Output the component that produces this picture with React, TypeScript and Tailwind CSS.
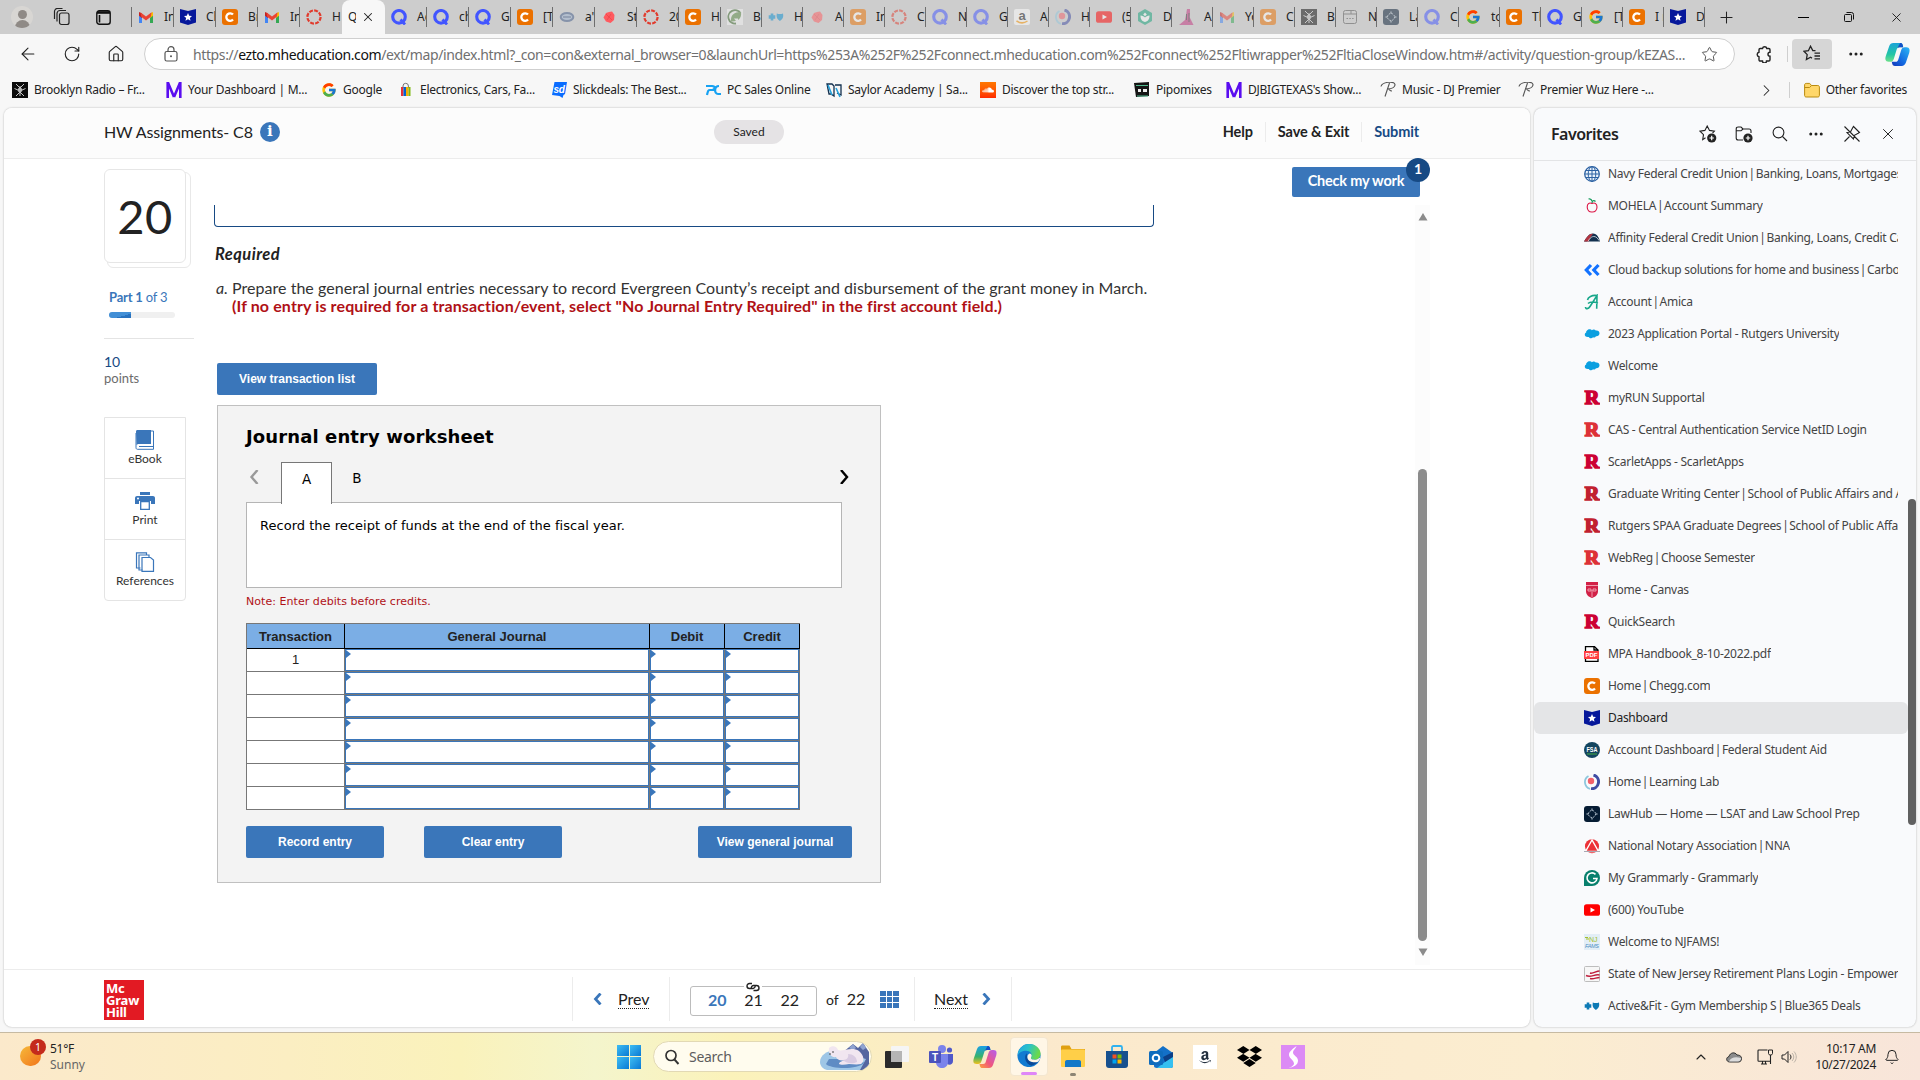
import type { ReactNode } from "react";
import { FcGoogle } from "react-icons/fc";
import { FaDropbox, FaAmazon, FaSoundcloud } from "react-icons/fa";
import {
  ArrowLeft,
  Bell,
  ChevronRight,
  ChevronUp,
  Ellipsis,
  House,
  Plus,
  RotateCw,
  Search,
  Star,
  X,
} from "lucide-react";

function Svg({ children, size = 16, box = 16 }: { children: ReactNode; size?: number; box?: number }) {
  return (
    <svg width={size} height={size} viewBox={`0 0 ${box} ${box}`} fill="none" className="shrink-0">
      {children}
    </svg>
  );
}

function Gmail() {
  return (
    <Svg>
      <path d="M1 3.500V14h3V7z" fill="#4285f4" />
      <path d="M15 3.500V14h-3V7z" fill="#34a853" />
      <path d="M12 4.500 15 3v3.800l-3 2.200z" fill="#fbbc04" />
      <path d="M1 3v3.800L4 9V4.500z" fill="#c5221f" />
      <path d="M2.400 3.200 8 7.500l5.600-4.300L12.800 7.800 8 11.500 3.200 7.800z" fill="#ea4335" />
    </Svg>
  );
}

function Shield() {
  return (
    <Svg>
      <path d="M0 0 8 2l8-2v13.500L8 16l-8-2.500z" fill="#06189b" />
      <path d="m8 4 1.200 2.700 2.800.3-2.100 1.900.6 2.900L8 10.300l-2.500 1.500.6-2.900L4 7l2.800-.3z" fill="#fff" />
    </Svg>
  );
}

function Chegg() {
  return (
    <Svg>
      <rect width="16" height="16" rx="3" fill="#eb7100" />
      <path d="M11 5.600A3.800 3.800 0 1 0 11 10.600" stroke="#fff" strokeWidth="2.300" />
    </Svg>
  );
}

function Canvas() {
  return (
    <Svg>
      <circle cx="8" cy="8" r="6.600" stroke="#e13b2d" strokeWidth="2.200" strokeDasharray="3.900 1.280" />
    </Svg>
  );
}

function QLetter() {
  return (
    <Svg>
      <circle cx="8" cy="7.800" r="6.300" stroke="#4255ff" strokeWidth="3.100" />
      <path d="m9.500 10.500 4.500 5" stroke="#4255ff" strokeWidth="2.800" />
    </Svg>
  );
}

function Ring() {
  return (
    <Svg>
      <ellipse cx="8" cy="8" rx="6.300" ry="4" stroke="#8693aa" strokeWidth="2" fill="#b4bfce" />
      <path d="M4 8h8" stroke="#76839b" />
    </Svg>
  );
}

function Berry() {
  return (
    <Svg>
      <path d="M8 3 11 2.500l2.500 3.500-.5 5L9.500 14l-4.500-1.500-2.500-4L5 4z" fill="#ff5a5f" />
      <path d="M5 5l6 6M10 5l-4 6" stroke="#e0393e" strokeWidth=".5" />
    </Svg>
  );
}

function Leaf() {
  return (
    <Svg>
      <rect width="16" height="16" fill="#f3f3f3" />
      <path d="M9 14.500A6.700 6.700 0 1 1 13.500 4" stroke="#3f6b2f" strokeWidth="1.800" />
      <path d="M4 12.500C3 5 9 2.500 14 3c1 6-3 10-10 9.500z" fill="#5b8a45" />
      <path d="M7 9.500h4v5z" fill="#f3f3f3" />
    </Svg>
  );
}

function BlueCross({ color = "#0d7ab5" }: { color?: string }) {
  return (
    <Svg>
      <path d="M2.700 4.500h2.600v1.700H7.300v3.600h-2v1.700H2.700V9.800H.7V6.200h2z" fill={color} />
      <path d="M8.800 4.500c2 .8 4.200.8 6.200 0 .8 3.500-.3 5.800-3.100 7.500-2.800-1.700-3.900-4-3.100-7.500z" fill={color} />
    </Svg>
  );
}

function Amazon() {
  return (
    <span className="flex h-4 w-4 shrink-0 flex-col items-center justify-center rounded-[2px] bg-white">
      <Svg>
        <text x="8" y="10.500" textAnchor="middle" fontSize="13" fontWeight="700" fill="#222" fontFamily="Liberation Sans">a</text>
        <path d="M2.500 11.800c3.500 2.600 7.500 2.600 11 .2" stroke="#ff9900" strokeWidth="1.500" />
      </Svg>
    </span>
  );
}

function Orbit() {
  return (
    <Svg>
      <path d="M9.500 1a7 7 0 0 1-2.500 13.700" stroke="#3f4ca3" strokeWidth="3" />
      <path d="M4.500 2a7 7 0 0 0 1.500 12.800" stroke="#8ec7dd" strokeWidth="1.800" />
      <circle cx="7" cy="7" r="3.200" fill="#f2606a" />
    </Svg>
  );
}

function YouTube() {
  return (
    <Svg>
      <rect y="2.200" width="16" height="11.600" rx="2.600" fill="#f00" />
      <path d="m6.500 5.500 4.500 2.500-4.500 2.500z" fill="#fff" />
    </Svg>
  );
}

function GreenHex() {
  return (
    <Svg>
      <path d="m8 0 7 4v8l-7 4-7-4V4z" fill="#16a37a" />
      <path d="M8 13C4 12 3.500 9 3.500 6.500c2 0 3.500 1 4.500 2 1-1 2.500-2 4.500-2C12.500 9 12 12 8 13z" fill="#fff" />
      <path d="m8 3.500 1.800 2L8 7.200 6.200 5.500z" fill="#fff" />
    </Svg>
  );
}

function Lady() {
  return (
    <Svg>
      <path d="M9 0h3v4l-.5 4 4 8H1l6-5 1-5z" fill="#c2347f" />
      <path d="M8.500 5v6M11 4v9" stroke="#333" />
    </Svg>
  );
}

function Radio() {
  return (
    <Svg>
      <rect width="16" height="16" fill="#0c0c0c" />
      <path d="m4 2 4 4 4-4M2.500 6.500 8 9l5.500-2.500M4 14l4-4 4 4M8 4v10" stroke="#c8c8c8" strokeWidth="1" />
      <circle cx="8" cy="8" r="2.300" fill="#bbb" />
    </Svg>
  );
}

function NotePage() {
  return (
    <Svg>
      <rect x="1.500" y="1.500" width="13" height="13" rx="2" stroke="#555" />
      <path d="M1.500 5h13M9 1.500V5M4.500 9.500h1.500m1.300 0h1.500m1.300 0h1.500" stroke="#555" />
    </Svg>
  );
}

function LawHub() {
  return (
    <Svg>
      <rect width="16" height="16" rx="3" fill="#061c33" />
      <circle cx="8" cy="8" r="3.500" stroke="#c8d4e0" strokeDasharray="1.500 1.250" />
      <path d="M8 2.500v2M8 11.500v2M2.500 8h2M11.500 8h2" stroke="#c8d4e0" />
    </Svg>
  );
}

function MLetter() {
  return (
    <Svg>
      <path d="M1.700 16V0M1.700 0 8 15M8 15 14.300 0M14.300 0v16" stroke="#5a0df0" strokeWidth="2.600" />
    </Svg>
  );
}

function ShoppingBag() {
  return (
    <Svg>
      <path d="M5 6V4a2.700 2.700 0 0 1 5.400 0v2" stroke="#777" />
      <path d="M3 5h2.500v9H3z" fill="#e53238" />
      <path d="M5.500 5H8v9H5.500z" fill="#0064d2" />
      <path d="M8 5h2.500v9H8z" fill="#f5af02" />
      <path d="M10.500 5h2v9h-2z" fill="#7db813" />
    </Svg>
  );
}

function Slick() {
  return (
    <Svg>
      <path d="M3.500 0H16l-2 12-1.500 1-1 3-3-2-7.500-1z" fill="#0a6cff" />
      <text x="2.500" y="11" fill="#fff" fontSize="10" fontStyle="italic" fontWeight="700" fontFamily="Liberation Sans">sd</text>
    </Svg>
  );
}

function PcSales() {
  return (
    <Svg>
      <path d="M1 4h6c4 0 3 4 0 4H5c-2 0-2 1-3 5M16 12h-3c-4 0-4-8 1-8" stroke="#17a2f2" strokeWidth="2.200" />
    </Svg>
  );
}

function Saylor() {
  return (
    <Svg>
      <path d="M1 2h5l2 2v10l-3-2H3zM9 3h6v10l-4-2" stroke="#12304f" strokeWidth="1.300" />
      <path d="m2 3 4 10M10 6l4 9" stroke="#25a2dc" strokeWidth="1.600" />
    </Svg>
  );
}

function SoundCloud() {
  return (
    <span className="flex h-4 w-4 shrink-0 items-center justify-center bg-linear-to-b from-[#ff7700] to-[#ff2a00]">
      <FaSoundcloud size={12} color="#fff" />
    </span>
  );
}

function Pipo() {
  return (
    <Svg>
      <path d="M0 1 15 0v14l-13 1z" fill="#151515" />
      <path d="M2 3.500h12M3 14h11" stroke="#4fb88d" strokeWidth="1.200" />
      <path d="M4 7h3v3H4zM9 7h4v3H9z" fill="#eee" />
    </Svg>
  );
}

function Premier() {
  return (
    <Svg>
      <path d="M1 4.500C2 0 14-1.500 15 2.500c0 3.500-5 4.500-8 4.500M9.500 1 5 14.500M8 7c2 0 1 2 4 2" stroke="#555" strokeWidth="1.100" />
    </Svg>
  );
}

function Globe() {
  return (
    <Svg>
      <circle cx="8" cy="8" r="7.300" fill="#eaf2fb" stroke="#2d62a3" strokeWidth="1.300" />
      <path d="M8 .7v14.600M1 8h14M2 4.500h12M2 11.500h12" stroke="#2d62a3" />
      <ellipse cx="8" cy="8" rx="3.800" ry="7.300" stroke="#2d62a3" />
    </Svg>
  );
}

function Apple() {
  return (
    <Svg>
      <path d="M8 5.500C5 4 3.200 6 3.200 9c0 3.200 2.100 5.200 4.800 5 2.900.2 5-1.800 5-5 0-3-2-5-5-3.500z" stroke="#dc1646" strokeWidth="1.100" />
      <path d="M4.500 1c1.500-.5 3 .5 3.500 2M8 5C8 2.500 10 2 11.500 3.500" stroke="#159a5b" strokeWidth="1.300" />
    </Svg>
  );
}

function Affinity() {
  return (
    <Svg>
      <path d="M0 11.500C3 7 5 3.500 9 3.500c4 0 6 4 7 8z" fill="#12304f" />
      <path d="M0 11.500C3 7 5 3.800 8.500 3.800 10 4 6 6 5 11.500z" fill="#b2343f" />
      <path d="M4 11.500c2-4 4-5 6-5s4 2 5 4" stroke="#dfe5ea" strokeWidth=".8" />
    </Svg>
  );
}

function Carbonite() {
  return (
    <Svg>
      <path d="M7 3 2.300 8 7 13M14.500 3 9.800 8l4.700 5" stroke="#1372ff" strokeWidth="3.200" />
    </Svg>
  );
}

function Amica() {
  return (
    <Svg>
      <path d="M1.500 13c0 2.500 3 2 4.500-.5L13 1.500l-.3 13.300M4 9.500c2-2 7-1.500 10-.5M12.500 1.500C8 1 4 3 3.500 6" stroke="#18a78a" strokeWidth="1.600" />
    </Svg>
  );
}

function Cloud() {
  return (
    <Svg>
      <path d="M3 4.500C4.500 2.500 7 3 7.800 4.200 9 3 11 3.200 11.800 4.500c2.200-.5 3.700 1 3.700 2.800 0 2-1.800 3.200-3.500 2.900-.8 1.400-2.200 1.500-3 1-1 1.500-3.500 1.300-4.200-.3C2 11.300.5 9.800.8 8.200 1 7.200 1.700 6.500 2.200 6.400 2 5.600 2.500 5 3 4.500z" fill="#0b9fe0" />
    </Svg>
  );
}

function RLetter({ color }: { color: string }) {
  return (
    <Svg>
      <text x="8" y="14.200" textAnchor="middle" fill={color} stroke={color} strokeWidth="1.600" fontSize="19" fontWeight="700" fontFamily="Liberation Serif" textLength="14.500" lengthAdjust="spacingAndGlyphs">
        R
      </text>
    </Svg>
  );
}

function Crest() {
  return (
    <Svg>
      <path d="M2 0h12v9c0 4-3 6-6 7-3-1-6-3-6-7z" fill="#d22147" />
      <path d="M2 3.500h12M8 8v7M4 7h3v2H4zM9 7h3v2H9z" stroke="#f3a9b8" strokeWidth=".9" />
    </Svg>
  );
}

function Pdf() {
  return (
    <Svg>
      <path d="M1.500 5V.7h9L14 4v11.300H1.500V12" fill="#fff" stroke="#000" strokeWidth="1.300" />
      <path d="M10 .5V4h4" stroke="#000" strokeWidth="1.300" />
      <rect y="5" width="15" height="8" fill="#ff4141" />
      <text x="7.500" y="11.200" textAnchor="middle" fontSize="6" fontWeight="700" fill="#fff" fontFamily="Liberation Sans">PDF</text>
    </Svg>
  );
}

function Fsa() {
  return (
    <Svg>
      <circle cx="8" cy="8" r="8" fill="#14455f" />
      <text x="8" y="10" textAnchor="middle" fontSize="7.500" fontWeight="700" fill="#fff" fontFamily="Liberation Sans" textLength="11" lengthAdjust="spacingAndGlyphs">FSA</text>
      <path d="M3 12h10" stroke="#3f9a46" strokeWidth="1.200" />
    </Svg>
  );
}

function Notary() {
  return (
    <Svg>
      <circle cx="8" cy="8.300" r="7" fill="#ec3237" />
      <path d="M8 2 1.500 13.500h13z" stroke="#fff" strokeWidth="1.400" fill="#ec3237" />
      <path d="M0 13.500h16" stroke="#a9a9b3" strokeWidth="1" />
    </Svg>
  );
}

function Grammarly() {
  return (
    <Svg>
      <path d="M0 16V8a8 8 0 1 1 8 8z" fill="#08806d" />
      <path d="M11.500 4.300A5 5 0 1 0 13 8.500H9" stroke="#fff" strokeWidth="1.600" />
    </Svg>
  );
}

function Njfams() {
  return (
    <Svg>
      <rect width="16" height="16" fill="#e3eef6" />
      <path d="M1 3.500h3M2 5h3" stroke="#a0bf2e" />
      <text x="5" y="7.500" fontSize="7" fill="#a0bf2e" fontFamily="Liberation Sans">NJ</text>
      <text x="1" y="13.500" fontSize="5.500" fill="#4c8fc3" fontStyle="italic" fontFamily="Liberation Sans" textLength="14">FAMS</text>
    </Svg>
  );
}

function Empower() {
  return (
    <Svg>
      <rect x=".5" y=".5" width="15" height="15" rx="1" fill="#f7f7f7" stroke="#bdbdbd" />
      <path d="M6 7c3 1 6-2 9.500-2M2 9.500c5 2.500 8-1.500 13.500-.5M6 12.500c4 1 6-1 9.500-1" stroke="#bf1e3d" strokeWidth="1.500" />
    </Svg>
  );
}

const leadTabs: [ReactNode, string][] = [
  [<Gmail />, "Inbox"],
  [<Shield />, "Ch"],
  [<Chegg />, "Br"],
  [<Gmail />, "Inbox"],
  [<Canvas />, "H"],
];

const midTabs: [ReactNode, string][] = [
  [<QLetter />, "Ac"],
  [<QLetter />, "ch"],
  [<QLetter />, "G"],
  [<Chegg />, "[T"],
  [<Ring />, "a'"],
  [<Berry />, "St"],
  [<Canvas />, "20"],
  [<Chegg />, "H"],
];

// [icon, visible title, sleeping]
const tailTabs: [ReactNode, string, boolean][] = [
  [<Leaf />, "B", true],
  [<BlueCross color="#0a8ed0" />, "H", true],
  [<Berry />, "A", true],
  [<Chegg />, "In", true],
  [<Canvas />, "C", true],
  [<QLetter />, "N", true],
  [<QLetter />, "G", true],
  [<Amazon />, "A", true],
  [<Orbit />, "H", true],
  [<YouTube />, "(5", true],
  [<GreenHex />, "D", true],
  [<Lady />, "A", true],
  [<Gmail />, "Yo", true],
  [<Chegg />, "C", true],
  [<Radio />, "B", true],
  [<NotePage />, "N", true],
  [<LawHub />, "La", true],
  [<QLetter />, "C", true],
  [<FcGoogle size={16} />, "to", false],
  [<Chegg />, "Th", false],
  [<QLetter />, "G", false],
  [<FcGoogle size={16} />, "[T", false],
  [<Chegg />, "I n", false],
  [<Shield />, "D", false],
];

function Tab({ icon, title, narrow, asleep, last }: { icon: ReactNode; title: string; narrow?: boolean; asleep?: boolean; last?: boolean }) {
  return (
    <div className={`flex h-full items-center ${narrow ? "w-[41px]" : "w-[42px]"}`}>
      <div className="flex min-w-0 flex-1 items-center overflow-hidden whitespace-nowrap pl-[6px]">
        <span className={`flex h-4 w-4 shrink-0 items-center ${asleep ? "opacity-50" : ""}`}>{icon}</span>
        <span className="pl-[10px] text-[12px] text-[#222]">{title}</span>
      </div>
      {!last && <div className="h-5 w-px bg-[#6e6e6e]" />}
    </div>
  );
}

function TabStrip() {
  return (
    <div className="flex h-[34px] items-center bg-[#cdcdcd]">
      <div className="flex w-[131px] items-center">
        <span className="ml-[11px] flex h-[22px] w-[22px] flex-col items-center justify-center overflow-hidden rounded-full bg-[#d8d6d3]">
          <span className="mt-1 h-[9px] w-[9px] rounded-full bg-[#8f8a86]" />
          <span className="mt-px h-[9px] w-[15px] rounded-t-full bg-[#8f8a86]" />
        </span>
        <span className="ml-[20px]">
          <Svg size={18} box={18}>
            <rect x="6.500" y="5" width="9.500" height="11.500" rx="2" stroke="#222" strokeWidth="1.200" />
            <path d="M4 13.500V5.500a3 3 0 0 1 3-3h6M1.500 11V3.500a3 3 0 0 1 3-3h5" stroke="#222" strokeWidth="1.200" />
          </Svg>
        </span>
        <span className="ml-[25px]">
          <Svg size={15} box={15}>
            <rect x=".8" y=".8" width="13.400" height="13.400" rx="2.500" stroke="#111" strokeWidth="1.400" />
            <path d="M1 2.500h13" stroke="#111" strokeWidth="2.600" />
            <path d="M3.500 5v7.500" stroke="#111" strokeWidth="1.600" />
          </Svg>
        </span>
      </div>
      <div className="h-5 w-px bg-[#6e6e6e]" />
      {leadTabs.map(([icon, title], i) => (
        <Tab key={i} icon={icon} title={title} last={i === leadTabs.length - 1} />
      ))}
      <div className="flex h-full w-[43px] items-center overflow-hidden rounded-t-lg bg-[#f7f7f7] pl-[6px]">
        <span className="w-[8px] overflow-hidden text-[12px] text-[#222]">Q</span>
        <X size={14} strokeWidth={1.800} color="#222" className="ml-[5px]" />
      </div>
      {midTabs.map(([icon, title], i) => (
        <Tab key={i} icon={icon} title={title} />
      ))}
      {tailTabs.map(([icon, title, asleep], i) => (
        <Tab key={i} icon={icon} title={title} asleep={asleep} narrow />
      ))}
      <Plus size={19} strokeWidth={1.300} color="#222" className="ml-[12px]" />
      <div className="ml-auto flex items-center gap-[35px] pr-[16px]">
        <div className="h-px w-[11px] bg-black" />
        <Svg size={10} box={10}>
          <rect x=".5" y="2.500" width="7" height="7" rx="1" stroke="#111" />
          <path d="M2.500.5h5a2 2 0 0 1 2 2v5" stroke="#111" />
        </Svg>
        <X size={15} strokeWidth={1.400} color="#111" />
      </div>
    </div>
  );
}

function CopilotLogo({ size, warm }: { size: number; warm?: boolean }) {
  return (
    <svg width={size} height={size} viewBox="0 0 24 24" className="shrink-0">
      <defs>
        <linearGradient id={warm ? "cpa" : "cpc"} x1="0" y1="0" x2="0" y2="1">
          <stop offset="0" stopColor={warm ? "#1aa0e8" : "#1aa4d8"} />
          <stop offset="0.600" stopColor={warm ? "#38b26a" : "#22c5a5"} />
          <stop offset="1" stopColor={warm ? "#f2c11d" : "#6fe08a"} />
        </linearGradient>
        <linearGradient id={warm ? "cpb" : "cpd"} x1="1" y1="0" x2="0" y2="1">
          <stop offset="0" stopColor={warm ? "#b45cf0" : "#2bb7f5"} />
          <stop offset="0.600" stopColor={warm ? "#f0577c" : "#1468e0"} />
          <stop offset="1" stopColor={warm ? "#ffa23a" : "#1236b8"} />
        </linearGradient>
      </defs>
      <path d="M8 1h6.500C17 1 17 3 17.500 5H14c-2 0-2.500 1-3 3L8.500 16c-.6 2-1.500 3-3.500 3H3.500C0 19 0 16 .8 13.500L4 4c.8-2 2-3 4-3z" fill={`url(#${warm ? "cpa" : "cpc"})`} />
      <path d="M14.500 1c2.500 0 2.500 2 3 4H14c-1.500 0-2.200.8-2.700 2z" fill="#1450c8" />
      <path d="M16 23H9.500C7 23 7 21 6.500 19H10c2 0 2.500-1 3-3l2.500-8c.6-2 1.500-3 3.500-3h1.500C24 5 24 8 23.200 10.500L20 20c-.8 2-2 3-4 3z" fill={`url(#${warm ? "cpb" : "cpd"})`} />
    </svg>
  );
}

function Toolbar() {
  return (
    <div className="flex h-[40px] items-center text-[#222]">
      <ArrowLeft size={20} strokeWidth={1.300} className="ml-[18px]" />
      <RotateCw size={18} strokeWidth={1.500} className="ml-[25px]" />
      <House size={18} strokeWidth={1.500} className="ml-[26px]" />
      <div className="ml-[19px] flex h-8 w-[1591px] items-center rounded-full border border-[#cfcfcf] bg-white">
        <span className="ml-[18px]">
          <Svg size={16} box={16}>
            <rect x="2" y="5.500" width="12" height="9.500" rx="1.800" stroke="#555" strokeWidth="1.200" />
            <path d="M5 5.500V3.700a3 3 0 0 1 6 0v1.800" stroke="#555" strokeWidth="1.200" />
            <circle cx="8" cy="10.200" r="1" fill="#555" />
          </Svg>
        </span>
        <div className="ml-[14px] w-[1500px] whitespace-nowrap text-[14px] tracking-[-0.390px] text-[#707070]">
          https://<span className="text-[#111]">ezto.mheducation.com</span>
          /ext/map/index.html?_con=con&external_browser=0&launchUrl=https%253A%252F%252Fconnect.mheducation.com%252Fconnect%252Fltiwrapper%252FltiaCloseWindow.htm#/activity/question-group/kEZAS...
        </div>
        <Star size={17} strokeWidth={1.400} color="#555" className="ml-[8px]" />
      </div>
      <span className="ml-[20px]">
        <Svg size={18} box={18}>
          <path d="M5.200 3.500h2.300a2.200 2.200 0 0 1 4.300 0h2c.7 0 1.200.5 1.200 1.200v2.500a2 2 0 0 0 0 4v3.600c0 .7-.5 1.200-1.200 1.200h-2.300a2 2 0 0 1-4 0H5.200c-.7 0-1.200-.5-1.200-1.200v-3a2.300 2.300 0 0 1 0-4.500V4.700c0-.7.500-1.200 1.200-1.200z" stroke="#222" strokeWidth="1.400" />
        </Svg>
      </span>
      <div className="ml-[14px] h-4 w-px bg-[#cfcfcf]" />
      <div className="ml-[4px] flex h-[30px] w-[40px] items-center justify-center rounded bg-[#d6d6d6]">
        <Svg size={18} box={18}>
          <path d="M12.500 5.600 9.800 5.500 7.500 1.200 5.400 5.700 1 6.300l3.200 3.300-.8 4.900 4.100-2.200 1.500.8M11.500 8.200H17M11.500 11H17M11.500 13.800H17" stroke="#222" strokeWidth="1.300" />
        </Svg>
      </div>
      <Ellipsis size={18} strokeWidth={2} className="ml-[15px]" />
      <span className="ml-[20px]"><CopilotLogo size={25} /></span>
    </div>
  );
}

const bookmarks: [ReactNode, string, string][] = [
  [<Radio />, "Brooklyn Radio – Fr...", "w-[154px]"],
  [<MLetter />, "Your Dashboard | M...", "w-[155px]"],
  [<FcGoogle size={16} />, "Google", "w-[77px]"],
  [<ShoppingBag />, "Electronics, Cars, Fa...", "w-[153px]"],
  [<Slick />, "Slickdeals: The Best...", "w-[154px]"],
  [<PcSales />, "PC Sales Online", "w-[121px]"],
  [<Saylor />, "Saylor Academy | Sa...", "w-[154px]"],
  [<SoundCloud />, "Discover the top str...", "w-[154px]"],
  [<Pipo />, "Pipomixes", "w-[92px]"],
  [<MLetter />, "DJBIGTEXAS's Show...", "w-[154px]"],
  [<Premier />, "Music - DJ Premier", "w-[138px]"],
  [<Premier />, "Premier Wuz Here -...", "w-[150px]"],
];

function BookmarksBar() {
  return (
    <div className="flex h-[34px] items-center pb-[2px] pl-[12px] text-[12px] tracking-[-0.250px] text-[#222]">
      {bookmarks.map(([icon, label, width], i) => (
        <div key={i} className={`flex shrink-0 items-center gap-[6px] whitespace-nowrap ${width}`}>
          {icon}
          <span>{label}</span>
        </div>
      ))}
      <ChevronRight size={19} strokeWidth={1.300} className="ml-auto" />
      <div className="ml-[13px] h-4 w-px bg-[#cfcfcf]" />
      <span className="ml-[14px]">
        <Svg>
          <path d="M.6 3c0-1 .6-1.600 1.600-1.600h3.500L7.500 3.500h6.300c1 0 1.600.6 1.600 1.600v8.300c0 1-.6 1.600-1.600 1.600H2.200c-1 0-1.600-.6-1.600-1.600z" fill="#ffd76a" stroke="#b98b10" />
          <path d="M.6 5.500h5L7.500 3.500" stroke="#b98b10" />
        </Svg>
      </span>
      <span className="ml-[6px] mr-[13px]">Other favorites</span>
    </div>
  );
}

function BlueButton({ label, width }: { label: string; width: string }) {
  return (
    <button className={`h-8 rounded-[2px] bg-[#3a76ba] text-center font-['Liberation_Sans',sans-serif] text-[12px] font-bold text-white ${width}`}>
      {label}
    </button>
  );
}

function SideTools() {
  return (
    <div className="w-[110px] shrink-0 pt-[10px]">
      <div className="relative h-[99px] w-[88px]">
        <div className="absolute left-[3px] top-[3px] h-[96px] w-[84px] rounded-md border border-[#e8e8e8]" />
        <div className="absolute left-0 top-0 flex h-[94px] w-[82px] items-center justify-center rounded-md border border-[#e6e6e6] bg-white text-[47px] tracking-[0.500px] text-[#222]">
          20
        </div>
      </div>
      <div className="ml-[5px] mt-[20px] text-[13px] leading-[18px] tracking-[-0.200px] text-[#3a76ba]">
        <b>Part 1</b> of 3
      </div>
      <div className="ml-[5px] mt-[6px] h-[6px] w-[66px] overflow-hidden rounded-full bg-[#f0f0f0]">
        <div className="h-full w-[22px] bg-linear-to-br from-[#428fd6] from-65% to-[#2872bf] to-65%" />
      </div>
      <div className="mt-[20px] w-[90px] border-t border-[#e4e4e4] pt-[14px] text-[14px] leading-[17px] text-[#174a84]">10</div>
      <div className="text-[13px] leading-[16px] text-[#6c6c6c]">points</div>
      <div className="mt-[31px] w-[82px] rounded-b border border-[#e4e4e4] text-[12px] text-[#333]">
        <div className="flex h-[61px] flex-col items-center border-b border-[#e4e4e4] pt-[12px]">
          <Svg size={20} box={20}>
            <path d="M1 1.500C1 .7 1.500 0 2.500 0H16v14H3l-1.500 1z" fill="#3a76ba" />
            <path d="M16 1h2.500v18.300H2.500C1 19.300 1 18 1 17V3M4 16.500h14" stroke="#3a76ba" strokeWidth="1" />
          </Svg>
          <span className="leading-[17px]">eBook</span>
        </div>
        <div className="flex h-[61px] flex-col items-center border-b border-[#e4e4e4] pt-[12px]">
          <Svg size={20} box={20}>
            <path d="M5 1h10v3H5zM2 5h16c1 0 2 .8 2 2v6h-4v-3H4v3H0V7c0-1.200 1-2 2-2z" fill="#3a76ba" />
            <path d="M5.700 10.500h8.600v7.800H5.700z" fill="#fff" stroke="#3a76ba" strokeWidth="1.300" />
            <circle cx="3" cy="7.500" r="1" fill="#fff" />
          </Svg>
          <span className="leading-[17px]">Print</span>
        </div>
        <div className="flex h-[60px] flex-col items-center pt-[12px]">
          <Svg size={20} box={20}>
            <path d="M5.500 16H1.500V.8h10v2M7.500 18H4V3h10v2" stroke="#3a76ba" strokeWidth="1.200" />
            <path d="M7 5.500h8.500l3 2.500v11.300H7z" stroke="#3a76ba" strokeWidth="1.200" />
          </Svg>
          <span className="leading-[17px]">References</span>
        </div>
      </div>
    </div>
  );
}

const journalRows = ["1", "", "", "", "", "", ""];

function InputCell({ width }: { width: string }) {
  return (
    <div className={`h-full border-b border-r border-[#777] ${width}`}>
      <div className="h-full border border-[#3a76ba] bg-white">
        <svg width="5" height="8" viewBox="0 0 5 8" className="block">
          <path d="M0 0 5 4 0 8z" fill="#3a76ba" />
        </svg>
      </div>
    </div>
  );
}

function JournalTable() {
  return (
    <div className="mt-[13px] w-[554px] border-l border-t border-[#777] font-['Liberation_Sans',sans-serif] text-[13px] text-[#222]">
      <div className="flex h-[25px] bg-[#7baee5] text-center font-bold leading-[25px]">
        <div className="w-[98px] border-b border-r border-black">Transaction</div>
        <div className="w-[305px] border-b border-r border-black">General Journal</div>
        <div className="w-[75px] border-b border-r border-black">Debit</div>
        <div className="w-[75px] border-b border-r border-black">Credit</div>
      </div>
      {journalRows.map((n, i) => (
        <div key={i} className="flex h-[23px]">
          <div className="w-[98px] border-b border-r border-[#777] bg-white text-center leading-[22px]">{n}</div>
          <InputCell width="w-[305px]" />
          <InputCell width="w-[75px]" />
          <InputCell width="w-[75px]" />
        </div>
      ))}
    </div>
  );
}

function Worksheet() {
  return (
    <div className="ml-[3px] mt-[10px] h-[478px] w-[664px] border border-[#c0c0c0] bg-[#f3f3f3] pl-[28px] font-['DejaVu_Sans',sans-serif] text-black">
      <div className="pt-[18px] text-[18px] font-bold leading-[26px] tracking-[0.120px]">Journal entry worksheet</div>
      <div className="mt-[12px] flex h-[40px] w-[606px] items-start text-[13.500px]">
        <div className="flex w-[35px] pl-[3px] pt-[8px]">
          <Svg size={14} box={14}>
            <path d="M8.500 0 2.500 7l6 7" stroke="#999" strokeWidth="2.400" />
          </Svg>
        </div>
        <div className="relative flex h-[42px] w-[51px] justify-center border border-b-0 border-[#777] bg-white leading-[32px]">A</div>
        <div className="w-[50px] text-center leading-[33px]">B</div>
        <div className="ml-auto flex pt-[8px]">
          <Svg size={14} box={14}>
            <path d="m3 0 6 7-6 7" stroke="#000" strokeWidth="2.400" />
          </Svg>
        </div>
      </div>
      <div className="h-[86px] w-[596px] border border-[#b5b5b5] bg-white pl-[13px] pt-[14px] text-[13px] leading-[18px] tracking-[0.020px]">
        Record the receipt of funds at the end of the fiscal year.
      </div>
      <div className="mt-[5px] text-[11px] leading-[17px] tracking-[0.050px] text-[#b01116]">Note: Enter debits before credits.</div>
      <JournalTable />
      <div className="mt-[16px] flex w-[606px]">
        <BlueButton label="Record entry" width="w-[138px]" />
        <span className="w-[40px]" />
        <BlueButton label="Clear entry" width="w-[138px]" />
        <span className="flex-1" />
        <BlueButton label="View general journal" width="w-[154px]" />
      </div>
    </div>
  );
}

function Assignment() {
  return (
    <div className="flex h-[919px] w-[1526px] flex-col overflow-hidden rounded-lg bg-white font-[Lato,sans-serif] shadow-[0_0_2px_rgba(0,0,0,0.3)]">
      <div className="flex h-[51px] shrink-0 items-center border-b border-[#ececec] bg-[#fcfcfc] pb-[3px] pl-[100px] text-[#222]">
        <div className="flex w-[610px] items-center text-[16px]">
          <span className="tracking-[-0.120px]">HW Assignments- C8</span>
          <span className="ml-[7px] flex h-5 w-5 items-center justify-center rounded-full bg-[#3a76ba] font-['DejaVu_Serif',serif] text-[15px] font-bold text-white">i</span>
        </div>
        <div className="h-6 w-[70px] rounded-full bg-[#e5e3e5] text-center text-[12px] leading-[23px]">Saved</div>
        <div className="ml-auto flex items-center pr-[111px] text-[14.500px] font-bold tracking-[-0.120px]">
          <span>Help</span>
          <span className="mx-[12px] h-5 w-px bg-[#ececec]" />
          <span>Save & Exit</span>
          <span className="mx-[12px] h-5 w-px bg-[#ececec]" />
          <span className="text-[#174a84]">Submit</span>
        </div>
      </div>
      <div className="flex h-[810px] shrink-0 pl-[100px]">
        <SideTools />
        <div className="flex flex-col">
          <div className="flex h-[46px] w-[1206px] justify-end pt-[8px]">
            <div className="relative h-[30px] w-[128px] rounded-[2px] bg-[#3a76ba] text-center text-[14.500px] font-bold leading-[28px] tracking-[-0.200px] text-white">
              Check my work
              <span className="absolute -right-[10px] -top-[9px] h-6 w-6 rounded-full bg-[#174a84] text-center text-[14px] leading-[22px]">1</span>
            </div>
          </div>
          <div className="flex">
            <div className="w-[1201px]">
              <div className="h-[22px] w-[940px] rounded-b border border-t-0 border-[#174a84]" />
              <div className="mt-[16px] pl-px text-[16.500px] font-bold italic leading-[22px] tracking-[0.450px] text-[#222]">Required</div>
              <div className="mt-[14px] flex pl-[2px] text-[16px] leading-[18px] text-[#333]">
                <i className="w-[16px]">a.</i>
                <div>
                  <div className="whitespace-nowrap tracking-[0.035px]">
                    Prepare the general journal entries necessary to record Evergreen County’s receipt and disbursement of the grant money in March.
                  </div>
                  <div className="whitespace-nowrap font-bold tracking-[0.125px] text-[#b01116]">
                    (If no entry is required for a transaction/event, select "No Journal Entry Required" in the first account field.)
                  </div>
                </div>
              </div>
              <div className="ml-[3px] mt-[48px] flex">
                <BlueButton label="View transaction list" width="w-[160px]" />
              </div>
              <Worksheet />
            </div>
            <div className="flex h-[760px] w-[15px] flex-col items-center bg-[#fcfcfc]">
              <svg width="10" height="8" viewBox="0 0 10 8" className="mt-[8px]">
                <path d="M5 0 9.500 7.500H.5z" fill="#8b8b8b" />
              </svg>
              <div className="mt-[248px] h-[472px] w-[9px] rounded-full bg-[#8b8b8b]" />
              <svg width="10" height="8" viewBox="0 0 10 8" className="mt-[7px]">
                <path d="M5 8 9.500.5H.5z" fill="#8b8b8b" />
              </svg>
            </div>
          </div>
        </div>
      </div>
      <div className="flex flex-1 items-center border-t border-[#ececec] pl-[100px] text-[16px] text-[#222]">
        <div className="mb-[-2px] h-10 w-10 bg-[#e21a23] pl-[2px] pt-[2px] font-['Noto_Sans',sans-serif] text-[13px] font-bold leading-[12px] tracking-[-0.200px] text-white">
          Mc
          <br />
          Graw
          <br />
          Hill
        </div>
        <div className="ml-[428px] flex h-11 w-[97px] items-center border-l border-[#ececec] pl-[19px] pt-px">
          <Svg size={12} box={12}>
            <path d="M8.500.5 3.500 6l5 5.500" stroke="#3a76ba" strokeWidth="2.800" />
          </Svg>
          <span className="ml-[14px] border-b border-dotted border-[#222] leading-[18px]">Prev</span>
        </div>
        <div className="flex h-11 w-[245px] items-center border-l border-[#ececec] pl-[20px] pt-px">
          <div className="relative mt-[3px] flex h-[30px] w-[127px] items-center justify-around rounded-[3px] border border-[#bcbcbc] px-[8px] pb-[2px]">
            <b className="text-[#3a76ba]">20</b>
            <span>21</span>
            <span>22</span>
            <span className="absolute -top-[6px] left-[53px] bg-white px-[2px]">
              <Svg size={14} box={14}>
                <path d="M6 2.500H3.500a2.500 2.500 0 0 0 0 5H7a2.500 2.500 0 0 0 2-3.500M7.500 9.500h3a2.500 2.500 0 0 0 0-5H7.300a2.500 2.500 0 0 0-2 3" stroke="#222" strokeWidth="1.400" />
              </Svg>
            </span>
          </div>
          <span className="ml-[9px] text-[14px]">of</span>
          <span className="ml-[8px]">22</span>
          <span className="ml-[15px] grid grid-cols-3 gap-[1px]">
            {Array.from({ length: 9 }, (_, i) => (
              <span key={i} className="h-[5px] w-[5.500px] bg-[#3a76ba]" />
            ))}
          </span>
        </div>
        <div className="flex h-11 w-[98px] items-center border-x border-[#ececec] pl-[19px] pt-px">
          <span className="border-b border-dotted border-[#222] leading-[18px]">Next</span>
          <span className="ml-[12px]">
            <Svg size={12} box={12}>
              <path d="m3.500.5 5 5.500-5 5.500" stroke="#3a76ba" strokeWidth="2.800" />
            </Svg>
          </span>
        </div>
      </div>
    </div>
  );
}

const favorites: [ReactNode, string][] = [
  [<Globe />, "Navy Federal Credit Union | Banking, Loans, Mortgages"],
  [<Apple />, "MOHELA | Account Summary"],
  [<Affinity />, "Affinity Federal Credit Union | Banking, Loans, Credit Cards"],
  [<Carbonite />, "Cloud backup solutions for home and business | Carbonite"],
  [<Amica />, "Account | Amica"],
  [<Cloud />, "2023 Application Portal - Rutgers University"],
  [<Cloud />, "Welcome"],
  [<RLetter color="#cc0033" />, "myRUN Supportal"],
  [<RLetter color="#dd3137" />, "CAS - Central Authentication Service NetID Login"],
  [<RLetter color="#cc0033" />, "ScarletApps - ScarletApps"],
  [<RLetter color="#c1202f" />, "Graduate Writing Center | School of Public Affairs and Administration"],
  [<RLetter color="#c1202f" />, "Rutgers SPAA Graduate Degrees | School of Public Affairs"],
  [<RLetter color="#dd3137" />, "WebReg | Choose Semester"],
  [<Crest />, "Home - Canvas"],
  [<RLetter color="#cc0033" />, "QuickSearch"],
  [<Pdf />, "MPA Handbook_8-10-2022.pdf"],
  [<Chegg />, "Home | Chegg.com"],
  [<Shield />, "Dashboard"],
  [<Fsa />, "Account Dashboard | Federal Student Aid"],
  [<Orbit />, "Home | Learning Lab"],
  [<LawHub />, "LawHub — Home — LSAT and Law School Prep"],
  [<Notary />, "National Notary Association | NNA"],
  [<Grammarly />, "My Grammarly - Grammarly"],
  [<YouTube />, "(600) YouTube"],
  [<Njfams />, "Welcome to NJFAMS!"],
  [<Empower />, "State of New Jersey Retirement Plans Login - Empower"],
  [<BlueCross />, "Active&Fit - Gym Membership S | Blue365 Deals"],
];

function FavoriteLabel({ text }: { text: string }) {
  const [before, after] = text.split("|");
  return (
    <span className="overflow-hidden whitespace-nowrap text-[12px] leading-5 tracking-[-0.290px]">
      {before}
      {after && <span className="-mx-[2px]">|</span>}
      {after}
    </span>
  );
}

function FavoritesPanel() {
  return (
    <div className="flex h-[919px] w-[382px] flex-col overflow-hidden rounded-lg bg-[#f9fafc] shadow-[0_0_2px_rgba(0,0,0,0.3)]">
      <div className="flex h-[53px] shrink-0 items-center border-b border-[#e3e4e6] pl-[17px] text-[#222]">
        <span className="w-[148px] text-[16px] font-semibold tracking-[-0.500px]">Favorites</span>
        <div className="flex gap-[18px]">
          <Svg size={18} box={18}>
            <path d="M6.500 12.800 3.700 14.700l.8-5L1 6.200l4.900-.8L8.200 1l2.300 4.400 4.900.8-1.900 2" stroke="#222" strokeWidth="1.100" />
            <circle cx="12.700" cy="13" r="4.600" fill="#222" />
            <path d="M12.700 10.800v4.400M10.500 13h4.400" stroke="#fff" strokeWidth="1.200" />
          </Svg>
          <Svg size={18} box={18}>
            <path d="M8 15H3.200c-1.300 0-2-.7-2-2V4c0-1.300.7-2 2-2H6l2 2h6c1.300 0 2 .7 2 2v2M1.200 5.800H6L8 4" stroke="#222" strokeWidth="1.100" />
            <circle cx="13" cy="13" r="4.600" fill="#222" />
            <path d="M13 10.800v4.400M10.800 13h4.400" stroke="#fff" strokeWidth="1.200" />
          </Svg>
          <Svg size={18} box={18}>
            <circle cx="7.500" cy="7.500" r="5.400" stroke="#222" strokeWidth="1.100" />
            <path d="m11.500 11.500 4.500 4.500" stroke="#222" strokeWidth="1.100" />
          </Svg>
          <Ellipsis size={18} strokeWidth={2} />
          <Svg size={18} box={18}>
            <path d="M1.500 1.500l15 15M10.500 1.500l6 6-1.300.8-3.800 2-1 3.700-6.400-6.400 3.700-1 2-3.800zM6.500 11.500l-5 5" stroke="#222" strokeWidth="1.100" />
          </Svg>
          <X size={18} strokeWidth={1.300} />
        </div>
      </div>
      <div className="flex">
        <div className="-mt-[3px] w-[374px] shrink-0">
          {favorites.map(([icon, label], i) => (
            <div
              key={i}
              className={`flex h-8 items-center gap-2 rounded-md pl-[50px] pr-[10px] ${label === "Dashboard" ? "bg-[#e4e5e7] text-[#222]" : "text-[#444]"}`}
            >
              {icon}
              <FavoriteLabel text={label} />
            </div>
          ))}
        </div>
        <div className="mt-[338px] h-[326px] w-2 rounded-full bg-[#606060]" />
      </div>
    </div>
  );
}

function TaskbarIcons() {
  return (
    <div className="flex items-center">
      <div className="grid grid-cols-2 gap-px">
        {[0, 1, 2, 3].map((i) => (
          <span key={i} className="h-[11.500px] w-[11.500px] bg-linear-to-br from-[#3dbdf2] to-[#0879d4]" />
        ))}
      </div>
      <div className="ml-[12px] flex h-[31px] w-[219px] items-center overflow-hidden rounded-full border border-[#e2d9b4] bg-[#fffcee]">
        <span className="ml-[10px]">
          <Svg size={16} box={16}>
            <circle cx="7" cy="6.500" r="5" stroke="#333" strokeWidth="1.700" />
            <path d="m10.500 10.500 4 4.500" stroke="#333" strokeWidth="1.900" />
          </Svg>
        </span>
        <span className="ml-[9px] w-[130px] text-[14px] tracking-[-0.300px] text-[#5d5d5d]">Search</span>
        <svg width="50" height="29" viewBox="0 0 50 29">
          <path d="m24 10 10-8 5 4 5-5 6 9v18H22z" fill="#5566a0" />
          <path d="m34 2 3 4-3 2-4-2zM44 1l3 5-3 2-3-3z" fill="#8fa3d0" />
          <path d="M1 20c0-7 8-12 16-11l30 8-6 11H8c-4-1-7-4-7-8z" fill="#9ec6e6" />
          <path d="M7 22c4 5 32 6 38-1l-3-4H10z" fill="#5f8cc4" />
          <path d="M10 6c3-3 8-2 9 2 4 2 14-4 21 1 5 4 6 11 2 13-5 1-8 0-12 0-4 1-9 1-10 0 0-2 3-3 6-4-4 1-8 0-9-3-4 1-8-3-7-9z" fill="#f1e6f0" />
          <path d="M24 18c4 0 6-3 5-6 5 0 9 3 9 8-4 2-10 2-14-2z" fill="#d9cbe2" />
          <circle cx="14" cy="10" r=".8" fill="#333" />
          <circle cx="11" cy="12" r=".8" fill="#333" />
        </svg>
      </div>
      <span className="ml-[13px]">
        <Svg size={24} box={24}>
          <rect x="0" y="6" width="17" height="17" rx="1" fill="#2b2b2b" />
          <rect x="6" y="1" width="18" height="16" rx="1" fill="#f5f5f5" />
          <rect x="6" y="6" width="11" height="11" fill="#b5b5b5" />
        </Svg>
      </span>
      <span className="ml-[20px]">
        <Svg size={24} box={24}>
          <circle cx="13" cy="4" r="4" fill="#7b83eb" />
          <circle cx="20.500" cy="5" r="2.600" fill="#5059c9" />
          <path d="M16 9h8v7c0 5-7 5-7 0z" fill="#5059c9" />
          <path d="M7 9h12v8c0 8-12 8-12 0z" fill="#7b83eb" />
          <rect x="0" y="6" width="12" height="12" rx="1" fill="#4b53bc" />
          <text x="6" y="15.500" textAnchor="middle" fontSize="10" fontWeight="700" fill="#fff" fontFamily="Liberation Sans">T</text>
        </Svg>
      </span>
      <span className="ml-[20px]"><CopilotLogo size={24} warm /></span>
      <div className="ml-[13px] flex h-[39px] w-[38px] flex-col items-center rounded border border-[#f3e6cf] bg-[#fff6e6] pt-[6px]">
        <svg width="24" height="24" viewBox="0 0 24 24">
          <defs>
            <linearGradient id="edgeTop" x1="0" y1="0" x2="1" y2="0.300">
              <stop offset="0" stopColor="#22a5e6" />
              <stop offset="0.500" stopColor="#2bc3c8" />
              <stop offset="1" stopColor="#6bd94a" />
            </linearGradient>
          </defs>
          <circle cx="12" cy="12" r="12" fill="#127bd1" />
          <path d="M.5 9.500C2 3.500 7 0 12 0c7 0 12 5 12 10 0 4-3.200 6.300-6.500 6.300-2.500 0-4.500-1-3-3C15.700 10 13 7 9 7 5 7 1.500 9 .3 12z" fill="url(#edgeTop)" />
          <path d="M9.500 9.500c-3 3.500-1.500 11 5 13 4-.5 6.500-3 8-5.500-5 3-12 1.500-12.500-4z" fill="#0b4a99" />
          <path d="M14.500 13.300c-1.500 2 .5 3 3 3 2.200 0 4.300-.9 5.500-2.400l.5 1.500-2 3c-4 1.500-10 .6-11-3.500-.5-2 0-4 2-5 1.500 0 3 1.500 2 3.400z" fill="#fff6e6" />
        </svg>
        <div className="mt-[5px] h-[3px] w-4 rounded-full bg-[#df86f7]" />
      </div>
      <div className="ml-[13px] flex flex-col items-center pt-[7px]">
        <Svg size={24} box={24}>
          <path d="M0 3c0-1 .5-1.500 1.500-1.500h7L10.500 5H24v4H0z" fill="#e0a010" />
          <rect y="5.500" width="24" height="17.500" rx="1" fill="#ffcf48" />
          <path d="M4 23v-5c0-1 .5-2 2-2h12c1.500 0 2 1 2 2v5z" fill="#1378c8" />
        </Svg>
        <div className="mt-[5px] h-[3px] w-[6px] rounded-full bg-[#8d8574]" />
      </div>
      <span className="ml-[20px]">
        <Svg size={24} box={24}>
          <path d="M7 6V2.500C7 1.500 7.500 1 8.500 1h7c1 0 1.500.5 1.500 1.500V6" stroke="#2fb1ef" strokeWidth="1.800" />
          <path d="M1 6h22v14c0 2-1 3-3 3H4c-2 0-3-1-3-3z" fill="#17508e" />
          <path d="M7.500 9.500h4v4h-4z" fill="#f25022" />
          <path d="M12.500 9.500h4v4h-4z" fill="#7fba00" />
          <path d="M7.500 14.500h4v4h-4z" fill="#00a4ef" />
          <path d="M12.500 14.500h4v4h-4z" fill="#ffb900" />
        </Svg>
      </span>
      <span className="ml-[20px]">
        <Svg size={24} box={24}>
          <path d="M5 8 14 1l10 7v13c0 1-1 2-2 2H8c-2 0-3-1-3-2z" fill="#1370c8" />
          <path d="m8 23 16-12v10c0 1-1 2-2 2z" fill="#35c0f0" />
          <path d="m14 12 10-5v5l-8 5z" fill="#0c3f86" />
          <rect x="0" y="6" width="14" height="14" rx="1.500" fill="#0f6cbd" />
          <circle cx="7" cy="13" r="3.300" stroke="#fff" strokeWidth="2" />
        </Svg>
      </span>
      <span className="ml-[20px] flex h-6 w-6 items-center justify-center bg-white">
        <FaAmazon size={14} color="#222f3e" />
      </span>
      <FaDropbox size={25} color="#000" className="ml-[20px]" />
      <span className="ml-[19px]">
        <Svg size={24} box={24}>
          <rect width="24" height="24" fill="#dc8af5" />
          <path d="M15.500 1C12 4 8 6 8 10c0 3 5 5.500 5 8.500 0 2-3 3.500-5 4.500 5-1 9-3 9-7.500 0-4-5-5-5-8C12 5 14.500 4 15.500 1z" fill="#fff" />
        </Svg>
      </span>
    </div>
  );
}

function Taskbar() {
  return (
    <div className="flex h-[48px] items-center border-t border-[#c6baa2] bg-[linear-gradient(90deg,#fbe9cb_0%,#fbeec2_15%,#faf2bb_24%,#f4f5cc_31%,#fbf2ba_38%,#fbe9cc_54%,#fbedd0_80%,#f8e5da_100%)] text-[12px] text-[#222]">
      <div className="flex w-[617px] items-center pl-[20px]">
        <div className="relative h-6 w-6">
          <div className="mt-px h-[20px] w-[21px] rounded-full bg-linear-to-br from-[#f5b93a] to-[#f0731a]" />
          <span className="absolute -top-[6px] left-[10px] h-4 w-4 rounded-full bg-[#c42b1c] text-center text-[10.500px] leading-4 text-white">1</span>
        </div>
        <div className="ml-[6px] leading-4">
          <div className="tracking-[-0.300px]">51°F</div>
          <div className="text-[#666]">Sunny</div>
        </div>
      </div>
      <TaskbarIcons />
      <div className="ml-auto flex items-center">
        <ChevronUp size={16} strokeWidth={1.700} />
        <span className="ml-[17px]">
          <Svg size={16} box={16}>
            <path d="M4 13C0 13-.5 8.500 3 7.500 4 3.500 9 2.500 11 6c3.500 0 5 2 4.500 4.500C15 12.500 13.500 13 12 13z" fill="#8b8b8b" stroke="#222" strokeWidth=".9" />
            <path d="M3 12.500c2-4 6-5 12-3.500-.3 2.700-1.500 3.500-3 3.500z" fill="#dcdcdc" />
          </Svg>
        </span>
        <span className="ml-[15px]">
          <Svg>
            <path d="M10.500 1H1.800C1.300 1 1 1.300 1 1.800v9.700c0 .5.300.8.800.8h11.500M4 15h6M5.500 12.500V15M8.500 12.500V15M13.500 6v9" stroke="#222" strokeWidth="1.100" />
            <path d="M11.500 1h4v3.500l-1 1.500h-2l-1-1.500z" stroke="#222" strokeWidth="1" />
          </Svg>
        </span>
        <span className="ml-[8px]">
          <Svg>
            <path d="M1 6h2.500L7 2.500v11L3.500 10H1z" stroke="#222" />
            <path d="M9 5.500c1.300 1.500 1.300 3.500 0 5" stroke="#222" />
            <path d="M11 4c2.300 2.500 2.300 5.500 0 8M13 2.500c3 3.300 3 7.700 0 11" stroke="#bcb3a8" />
          </Svg>
        </span>
        <div className="ml-[10px] w-[69px] text-right leading-4 tracking-[-0.300px]">
          <div>10:17 AM</div>
          <div>10/27/2024</div>
        </div>
        <Bell size={16} strokeWidth={1.500} className="ml-[8px] mr-[20px]" />
      </div>
    </div>
  );
}

export default function App() {
  return (
    <div className="flex h-[1080px] w-[1920px] flex-col overflow-hidden bg-[#f7f7f7] font-['Noto_Sans','Open_Sans',sans-serif]">
      <TabStrip />
      <Toolbar />
      <BookmarksBar />
      <div className="flex flex-1 gap-[4px] pl-[4px]">
        <Assignment />
        <FavoritesPanel />
      </div>
      <Taskbar />
    </div>
  );
}
